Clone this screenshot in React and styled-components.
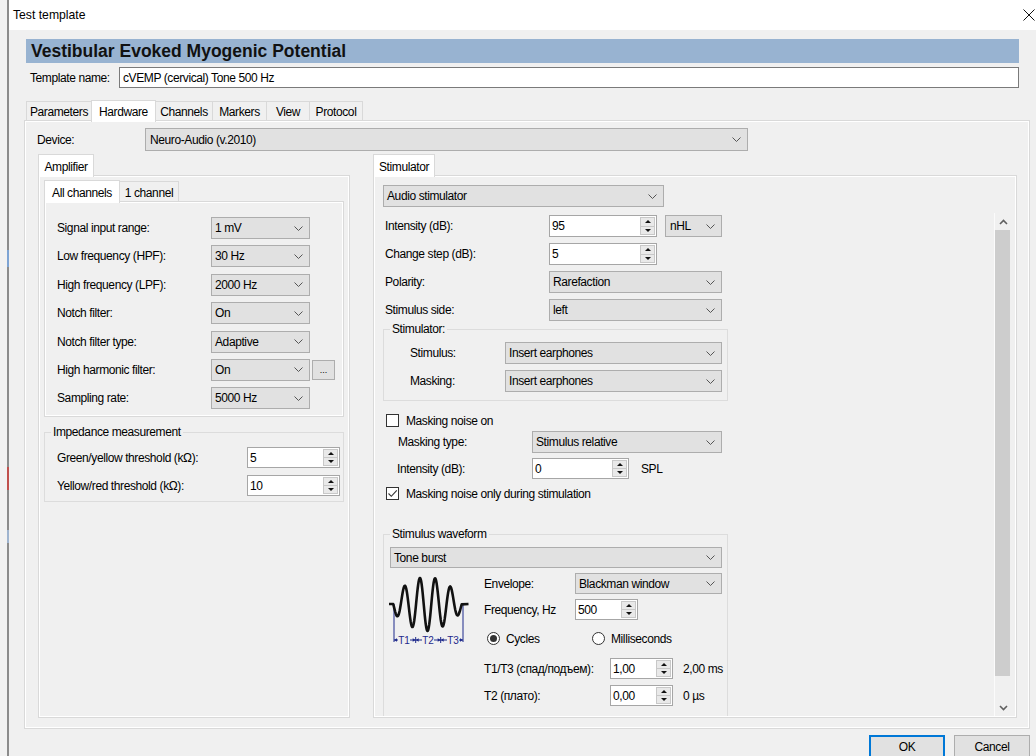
import React from 'react';
import styled, { createGlobalStyle } from 'styled-components';

const GlobalStyle = createGlobalStyle`
  html, body {
    margin: 0;
    padding: 0;
  }
  body {
    background: #f0f0f0;
    font-family: 'Liberation Sans', Arial, sans-serif;
    font-size: 12px;
    letter-spacing: -0.4px;
    color: #000;
    overflow: hidden;
  }
  * {
    box-sizing: border-box;
  }
`;

const Screen = styled.div`
  display: flex;
  width: 1036px;
  height: 756px;
  overflow: hidden;
`;

// edge of the main window behind the dialog
const BackStrip = styled.div`
  flex: 0 0 9px;
  background:
    linear-gradient(
        #8c8c8c 0 250px,
        #7ea4d4 250px 267px,
        #8c8c8c 267px 467px,
        #c0504d 467px 490px,
        #8c8c8c 490px 530px,
        #9fb4cf 530px 543px,
        #8c8c8c 543px
      )
      right top / 2px 100% no-repeat,
    #f2f2f2;
`;

const Dialog = styled.div`
  flex: 1;
  display: flex;
  flex-direction: column;
  background: #f0f0f0;
`;

const TitleBar = styled.div`
  height: 30px;
  flex-shrink: 0;
  background: #fff;
  display: flex;
  align-items: center;
  justify-content: space-between;
  padding: 0 1px 0 4px;
  font-size: 12.2px;
  letter-spacing: 0;
`;

const Body = styled.div`
  flex: 1;
  display: flex;
  flex-direction: column;
  padding: 9px 5px 0 15px;
`;

const Header = styled.div`
  width: 993px;
  margin-left: 2px;
  height: 24px;
  background: #98b3d1;
  padding-left: 5px;
  font-size: 17.5px;
  font-weight: bold;
  letter-spacing: 0;
  line-height: 24px;
  color: #111;
`;

const TemplateRow = styled.div`
  width: 989px;
  margin: 4px 0 0 6px;
  display: flex;
  align-items: center;
  height: 21px;
`;

const TextInput = styled.div`
  flex: 1;
  height: 21px;
  border: 1px solid #7a7a7a;
  background: #fff;
  padding-left: 3px;
  display: flex;
  align-items: center;
`;

const TabStrip = styled.div`
  margin: 11px 0 0 2px;
  display: flex;
  align-items: flex-end;
  height: 22px;
`;

const Tab = styled.div`
  width: ${p => p.$w}px;
  height: ${p => (p.$active ? p.$h + 2 : p.$h)}px;
  margin-left: ${p => (p.$first ? 0 : -1)}px;
  margin-bottom: ${p => (p.$active ? -1 : 0)}px;
  border: 1px solid #d9d9d9;
  border-bottom: none;
  background: ${p => (p.$active ? '#fff' : '#f0f0f0')};
  display: flex;
  align-items: center;
  justify-content: center;
  padding-top: 1px;
  ${p => p.$active && 'position: relative; z-index: 1;'}
`;

const TabPanel = styled.div`
  width: 1006px;
  margin-top: -1px;
  height: 609px;
  border: 1px solid #d9d9d9;
  box-shadow: inset 0 0 0 1px #fff;
  padding: 7px 12px 0 12px;
`;

const FieldRow = styled.div`
  display: flex;
  align-items: center;
  height: ${p => p.$h || 22}px;
  margin-top: ${p => p.$mt || 0}px;
`;

const FieldLabel = styled.div`
  flex-shrink: 0;
  width: ${p => p.$w}px;
  padding-left: ${p => p.$pl || 0}px;
  white-space: nowrap;
`;

const SelectBox = styled.div`
  width: ${p => p.$w}px;
  height: ${p => p.$h}px;
  flex-shrink: 0;
  border: 1px solid #adadad;
  background: #e1e1e1;
  display: flex;
  align-items: center;
  justify-content: space-between;
  padding: 0 6px 0 ${p => p.$pl}px;
  white-space: nowrap;
`;

const SpinBox = styled.div`
  width: ${p => p.$w}px;
  height: ${p => p.$h}px;
  flex-shrink: 0;
  border: 1px solid #a6a6a6;
  background: #fff;
  display: flex;
  padding: 1px;
`;

const SpinValue = styled.div`
  flex: 1;
  padding-left: 1px;
  display: flex;
  align-items: center;
`;

const SpinButtons = styled.div`
  width: 15px;
  display: flex;
  flex-direction: column;
  border: 1px solid #c8c8c8;
  background: #e9e9e9;
`;

const SpinHalf = styled.div`
  flex: 1;
  display: flex;
  align-items: center;
  justify-content: center;
  & + & {
    border-top: 1px solid #c8c8c8;
  }
`;

const Triangle = styled.div`
  width: 0;
  height: 0;
  border-left: 3px solid transparent;
  border-right: 3px solid transparent;
  ${p => (p.$down ? 'border-top: 3px solid #111;' : 'border-bottom: 3px solid #111;')}
`;

const GroupsRow = styled.div`
  margin: 3px 0 0 1px;
  display: flex;
  align-items: stretch;
  gap: 23px;
`;

const GroupColumn = styled.div`
  display: flex;
  flex-direction: column;
`;

const GroupTabs = styled.div`
  display: flex;
  align-items: flex-end;
  height: 22px;
`;

const GroupPanel = styled.div`
  width: ${p => p.$w}px;
  ${p => (p.$h ? `height: ${p.$h}px;` : 'flex: 1;')}
  margin-top: -1px;
  border: 1px solid #d9d9d9;
  box-shadow: inset 0 0 0 1px #fff;
  padding: ${p => p.$pad};
  display: flex;
  flex-direction: column;
`;

const EllipsisButton = styled.div`
  width: 23px;
  height: 20px;
  margin-left: 2px;
  border: 1px solid #adadad;
  background: #e1e1e1;
  display: flex;
  align-items: flex-end;
  justify-content: center;
  padding-bottom: 4px;
  font-size: 9px;
  letter-spacing: 0;
  line-height: 9px;
`;

const Group = styled.fieldset`
  margin: ${p => p.$mt}px 0 0 0;
  width: ${p => p.$w}px;
  min-width: 0;
  border: 1px solid #dcdcdc;
  padding: ${p => p.$pad};
`;

const Legend = styled.legend`
  margin-left: ${p => p.$ml}px;
  padding: 0 2px;
  line-height: 13px;
`;

const ScrollArea = styled.div`
  flex: 1;
  min-height: 0;
  margin-top: 6px;
  display: flex;
  overflow: hidden;
`;

const ScrollContent = styled.div`
  flex: 1;
  overflow: hidden;
  padding-top: 2px;
`;

const Scrollbar = styled.div`
  width: 17px;
  display: flex;
  flex-direction: column;
  border-left: 1px solid #fbfbfb;
  background: #f0f0f0;
`;

const ScrollArrow = styled.div`
  height: 17px;
  display: flex;
  align-items: center;
  justify-content: center;
`;

const ScrollThumb = styled.div`
  height: 446px;
  margin-right: 1px;
  background: #cdcdcd;
`;

const ScrollTrack = styled.div`
  flex: 1;
`;

const CheckRow = styled.div`
  display: flex;
  align-items: center;
  height: 13px;
  margin-top: ${p => p.$mt}px;
  padding-left: 3px;
  gap: 7px;
`;

const Box = styled.div`
  width: 13px;
  height: 13px;
  border: 1px solid #333;
  background: #fff;
  display: flex;
  align-items: center;
  justify-content: center;
`;

const RadioRow = styled.div`
  display: flex;
  align-items: center;
  height: 13px;
  margin-top: ${p => p.$mt}px;
`;

const RadioItem = styled.div`
  width: ${p => p.$w}px;
  display: flex;
  align-items: center;
  gap: 6px;
  padding-left: 3px;
`;

const RadioCircle = styled.div`
  width: 13px;
  height: 13px;
  border: 1px solid #333;
  border-radius: 50%;
  background: #fff;
  display: flex;
  align-items: center;
  justify-content: center;
  &::after {
    content: '';
    width: 7px;
    height: 7px;
    border-radius: 50%;
    background: ${p => (p.$on ? '#333' : 'transparent')};
  }
`;

const WaveBody = styled.div`
  display: flex;
  margin-top: 5px;
`;

const WaveFigure = styled.svg`
  margin-left: -2px;
  flex-shrink: 0;
`;

const WaveFields = styled.div`
  margin-left: 14px;
  display: flex;
  flex-direction: column;
`;

const Suffix = styled.div`
  margin-left: ${p => p.$ml}px;
  white-space: nowrap;
`;

const ButtonRow = styled.div`
  width: 1007px;
  margin-top: 6px;
  display: flex;
  justify-content: flex-end;
  gap: 9px;
  padding-right: 1px;
`;

const Button = styled.div`
  width: 76px;
  height: 23px;
  border: 1px solid ${p => (p.$primary ? '#0078d7' : '#adadad')};
  ${p => p.$primary && 'box-shadow: inset 0 0 0 1px #0078d7;'}
  background: #e1e1e1;
  display: flex;
  align-items: center;
  justify-content: center;
`;

const Chevron = () => (
  <svg width="9" height="5" viewBox="0 0 9 5">
    <path d="M0.5 0.5 L4.5 4.5 L8.5 0.5" fill="none" stroke="#555" strokeWidth="1" />
  </svg>
);

const Select = ({ w, h = 22, pl = 3, children }) => (
  <SelectBox $w={w} $h={h} $pl={pl}>
    <span>{children}</span>
    <Chevron />
  </SelectBox>
);

const Spin = ({ w, h = 21, value }) => (
  <SpinBox $w={w} $h={h}>
    <SpinValue>{value}</SpinValue>
    <SpinButtons>
      <SpinHalf>
        <Triangle />
      </SpinHalf>
      <SpinHalf>
        <Triangle $down />
      </SpinHalf>
    </SpinButtons>
  </SpinBox>
);

const CheckBox = ({ checked }) => (
  <Box>
    {checked && (
      <svg width="11" height="11" viewBox="0 0 11 11">
        <path d="M1.5 5.5 L4.3 8.3 L9.8 2.3" fill="none" stroke="#333" strokeWidth="1.1" />
      </svg>
    )}
  </Box>
);

// tone burst shape: carrier under a raised-cosine envelope
const wavePath = (() => {
  const base = 31;
  const pts = [`M1 ${base}`, `L5.2 ${base}`];
  for (let x = 5.2; x <= 74; x += 0.5) {
    const amp = 6 + 21 * Math.sin((Math.PI * (x - 2)) / 74);
    const y = base + amp * Math.sin((2 * Math.PI * (x - 5.2)) / 15.25);
    pts.push(`L${x.toFixed(2)} ${y.toFixed(2)}`);
  }
  pts.push(`L80.5 ${base}`);
  return pts.join(' ');
})();

const arrowHead = (x, dir) =>
  `${x},67 ${x + 3 * dir},65.3 ${x + 3 * dir},68.7`;

const ToneBurst = () => (
  <WaveFigure width="82" height="72" viewBox="0 0 82 72">
    <g stroke="#1f2a8c" strokeWidth="1" fill="none">
      <path d="M6 31 V69 M75 31 V69 M27.7 64 V70 M52.7 64 V70" />
      <path d="M6 67 H10 M22 67 H27.7 M27.7 67 H34 M46 67 H52.7 M52.7 67 H59 M71 67 H75" />
    </g>
    <g fill="#1f2a8c">
      <polygon points={arrowHead(6, 1)} />
      <polygon points={arrowHead(27.7, -1)} />
      <polygon points={arrowHead(27.7, 1)} />
      <polygon points={arrowHead(52.7, -1)} />
      <polygon points={arrowHead(52.7, 1)} />
      <polygon points={arrowHead(75, -1)} />
      <text x="16" y="70.5" fontSize="10" textAnchor="middle" letterSpacing="0">T1</text>
      <text x="40" y="70.5" fontSize="10" textAnchor="middle" letterSpacing="0">T2</text>
      <text x="65" y="70.5" fontSize="10" textAnchor="middle" letterSpacing="0">T3</text>
    </g>
    <path d={wavePath} fill="none" stroke="#111" strokeWidth="2.6" strokeLinejoin="round" />
  </WaveFigure>
);

const mainTabs = [
  { label: 'Parameters', w: 66 },
  { label: 'Hardware', w: 65, active: true },
  { label: 'Channels', w: 58 },
  { label: 'Markers', w: 55 },
  { label: 'View', w: 44 },
  { label: 'Protocol', w: 54 },
];

const amplifierFields = [
  { label: 'Signal input range:', value: '1 mV' },
  { label: 'Low frequency (HPF):', value: '30 Hz' },
  { label: 'High frequency (LPF):', value: '2000 Hz' },
  { label: 'Notch filter:', value: 'On' },
  { label: 'Notch filter type:', value: 'Adaptive' },
  { label: 'High harmonic filter:', value: 'On', more: true },
  { label: 'Sampling rate:', value: '5000 Hz' },
];

const App = () => (
  <Screen>
    <GlobalStyle />
    <BackStrip />
    <Dialog>
      <TitleBar>
        <span>Test template</span>
        <svg width="12" height="12" viewBox="0 0 12 12">
          <path d="M0.5 0.5 L11.5 11.5 M11.5 0.5 L0.5 11.5" stroke="#111" strokeWidth="1" />
        </svg>
      </TitleBar>

      <Body>
        <Header>Vestibular Evoked Myogenic Potential</Header>
        <TemplateRow>
          <FieldLabel $w={89}>Template name:</FieldLabel>
          <TextInput>cVEMP (cervical) Tone 500 Hz</TextInput>
        </TemplateRow>

        <TabStrip>
          {mainTabs.map((t, i) => (
            <Tab key={t.label} $w={t.w} $h={20} $first={i === 0} $active={t.active}>
              {t.label}
            </Tab>
          ))}
        </TabStrip>

        <TabPanel>
          <FieldRow $h={23}>
            <FieldLabel $w={108}>Device:</FieldLabel>
            <Select w={603} h={23} pl={4}>Neuro-Audio (v.2010)</Select>
          </FieldRow>

          <GroupsRow>
            <GroupColumn>
              <GroupTabs>
                <Tab $w={56} $h={21} $first $active>Amplifier</Tab>
              </GroupTabs>
              <GroupPanel $w={312} $pad="4px 4px 0 5px">
                <GroupTabs>
                  <Tab $w={76} $h={21} $first $active>All channels</Tab>
                  <Tab $w={60} $h={21}>1 channel</Tab>
                </GroupTabs>
                <GroupPanel $w={300} $h={216} $pad="15px 0 0 12px">
                  {amplifierFields.map((f, i) => (
                    <FieldRow key={f.label} $mt={i === 0 ? 0 : 6.4}>
                      <FieldLabel $w={154}>{f.label}</FieldLabel>
                      <Select w={99}>{f.value}</Select>
                      {f.more && <EllipsisButton>...</EllipsisButton>}
                    </FieldRow>
                  ))}
                </GroupPanel>

                <Group $mt={9} $w={300} $pad="8px 4px 5px 12px">
                  <Legend $ml={-6}>Impedance measurement</Legend>
                  <FieldRow $h={21}>
                    <FieldLabel $w={190}>Green/yellow threshold (kΩ):</FieldLabel>
                    <Spin w={93} value="5" />
                  </FieldRow>
                  <FieldRow $h={21} $mt={7}>
                    <FieldLabel $w={190}>Yellow/red threshold (kΩ):</FieldLabel>
                    <Spin w={93} value="10" />
                  </FieldRow>
                </Group>
              </GroupPanel>
            </GroupColumn>

            <GroupColumn>
              <GroupTabs>
                <Tab $w={62} $h={21} $first $active>Stimulator</Tab>
              </GroupTabs>
              <GroupPanel $w={644} $h={543} $pad="9px 5px 1px 9px">
                <Select w={281}>Audio stimulator</Select>

                <ScrollArea>
                  <ScrollContent>
                    <FieldRow>
                      <FieldLabel $w={166} $pl={2}>Intensity (dB):</FieldLabel>
                      <Spin w={108} h={22} value="95" />
                      <Suffix $ml={8}>
                        <Select w={57} pl={4}>nHL</Select>
                      </Suffix>
                    </FieldRow>
                    <FieldRow $mt={6}>
                      <FieldLabel $w={166} $pl={2}>Change step (dB):</FieldLabel>
                      <Spin w={108} h={22} value="5" />
                    </FieldRow>
                    <FieldRow $mt={6}>
                      <FieldLabel $w={166} $pl={2}>Polarity:</FieldLabel>
                      <Select w={173}>Rarefaction</Select>
                    </FieldRow>
                    <FieldRow $mt={6}>
                      <FieldLabel $w={166} $pl={2}>Stimulus side:</FieldLabel>
                      <Select w={173}>left</Select>
                    </FieldRow>

                    <Group $mt={2} $w={345} $pad="6px 6px 8px 26px">
                      <Legend $ml={-20}>Stimulator:</Legend>
                      <FieldRow>
                        <FieldLabel $w={95}>Stimulus:</FieldLabel>
                        <Select w={217}>Insert earphones</Select>
                      </FieldRow>
                      <FieldRow $mt={6}>
                        <FieldLabel $w={95}>Masking:</FieldLabel>
                        <Select w={217}>Insert earphones</Select>
                      </FieldRow>
                    </Group>

                    <CheckRow $mt={13}>
                      <CheckBox />
                      <span>Masking noise on</span>
                    </CheckRow>
                    <FieldRow $mt={4}>
                      <FieldLabel $w={149} $pl={15}>Masking type:</FieldLabel>
                      <Select w={190}>Stimulus relative</Select>
                    </FieldRow>
                    <FieldRow $h={21} $mt={5}>
                      <FieldLabel $w={149} $pl={14}>Intensity (dB):</FieldLabel>
                      <Spin w={97} value="0" />
                      <Suffix $ml={12}>SPL</Suffix>
                    </FieldRow>
                    <CheckRow $mt={8}>
                      <CheckBox checked />
                      <span>Masking noise only during stimulation</span>
                    </CheckRow>

                    <Group $mt={28} $w={345} $pad="6px 5px 10px 6px">
                      <Legend $ml={0}>Stimulus waveform</Legend>
                      <Select w={332} h={21}>Tone burst</Select>
                      <WaveBody>
                        <ToneBurst />
                        <WaveFields>
                          <FieldRow $h={21}>
                            <FieldLabel $w={91}>Envelope:</FieldLabel>
                            <Select w={147} h={21}>Blackman window</Select>
                          </FieldRow>
                          <FieldRow $h={21} $mt={5}>
                            <FieldLabel $w={91}>Frequency, Hz</FieldLabel>
                            <Spin w={63} value="500" />
                          </FieldRow>
                          <RadioRow $mt={12}>
                            <RadioItem $w={105}>
                              <RadioCircle $on />
                              <span>Cycles</span>
                            </RadioItem>
                            <RadioItem $w={110}>
                              <RadioCircle />
                              <span>Milliseconds</span>
                            </RadioItem>
                          </RadioRow>
                          <FieldRow $h={21} $mt={13}>
                            <FieldLabel $w={126}>T1/T3 (спад/подъем):</FieldLabel>
                            <Spin w={63} value="1,00" />
                            <Suffix $ml={10}>2,00 ms</Suffix>
                          </FieldRow>
                          <FieldRow $h={21} $mt={6}>
                            <FieldLabel $w={126}>T2 (плато):</FieldLabel>
                            <Spin w={63} value="0,00" />
                            <Suffix $ml={10}>0 µs</Suffix>
                          </FieldRow>
                        </WaveFields>
                      </WaveBody>
                    </Group>
                  </ScrollContent>

                  <Scrollbar>
                    <ScrollArrow>
                      <svg width="9" height="6" viewBox="0 0 9 6">
                        <path d="M1 5 L4.5 1.5 L8 5" fill="none" stroke="#606060" strokeWidth="1.6" />
                      </svg>
                    </ScrollArrow>
                    <ScrollThumb />
                    <ScrollTrack />
                    <ScrollArrow>
                      <svg width="9" height="6" viewBox="0 0 9 6">
                        <path d="M1 1 L4.5 4.5 L8 1" fill="none" stroke="#606060" strokeWidth="1.6" />
                      </svg>
                    </ScrollArrow>
                  </Scrollbar>
                </ScrollArea>
              </GroupPanel>
            </GroupColumn>
          </GroupsRow>
        </TabPanel>

        <ButtonRow>
          <Button $primary>OK</Button>
          <Button>Cancel</Button>
        </ButtonRow>
      </Body>
    </Dialog>
  </Screen>
);

export default App;
